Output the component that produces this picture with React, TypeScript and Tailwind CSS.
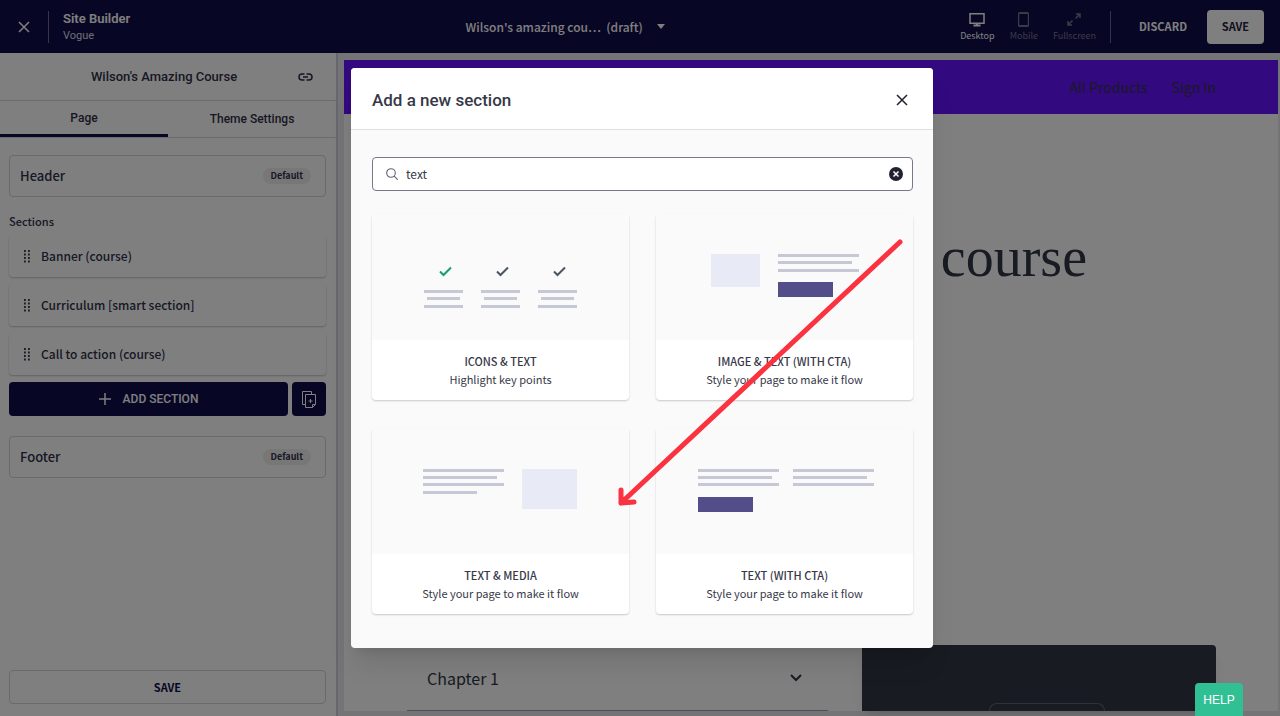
import { useState } from "react";
import type { ReactNode } from "react";

const sans = "font-['Noto_Sans_CJK_SC','Noto_Sans',sans-serif]";
const display = "font-[Roboto,'Noto_Sans',sans-serif]";

const pageSections = ["Banner (course)", "Curriculum [smart section]", "Call to action (course)"];

interface LineProps {
  x: number;
  y: number;
  width: number;
}

function Line({ x, y, width }: LineProps) {
  return <rect x={x} y={y} width={width} height="3" fill="#c6c9d5" />;
}

function CtaBlock({ x, y }: { x: number; y: number }) {
  return <rect x={x} y={y} width="55" height="15" fill="#534e8a" />;
}

const templates: { title: string; description: string; art: ReactNode }[] = [
  {
    title: "ICONS & TEXT",
    description: "Highlight key points",
    art: (
      <>
        {[0, 57, 114].map((offset) => (
          <g key={offset} transform={`translate(${offset} 0)`}>
            <path
              d="M68 57.5l3.5 3.5 7.5-7.5"
              fill="none"
              stroke={offset === 0 ? "#12a06c" : "#4b5560"}
              strokeWidth="2"
            />
            <Line x={52} y={76} width={39} />
            <Line x={55} y={83} width={33} />
            <Line x={52} y={91} width={39} />
          </g>
        ))}
      </>
    ),
  },
  {
    title: "IMAGE & TEXT (WITH CTA)",
    description: "Style your page to make it flow",
    art: (
      <>
        <rect x="55" y="40" width="49" height="33" fill="#e8ebf5" />
        <Line x={122} y={40} width={81} />
        <Line x={122} y={47} width={74} />
        <Line x={122} y={55} width={81} />
        <CtaBlock x={122} y={68} />
      </>
    ),
  },
  {
    title: "TEXT & MEDIA",
    description: "Style your page to make it flow",
    art: (
      <>
        <Line x={51} y={41} width={81} />
        <Line x={51} y={48} width={74} />
        <Line x={51} y={55} width={81} />
        <Line x={51} y={63} width={54} />
        <rect x="150" y="41" width="55" height="40" fill="#e8ebf5" />
      </>
    ),
  },
  {
    title: "TEXT (WITH CTA)",
    description: "Style your page to make it flow",
    art: (
      <>
        {[42, 137].map((x) => (
          <g key={x}>
            <Line x={x} y={41} width={81} />
            <Line x={x} y={48} width={74} />
            <Line x={x} y={55} width={81} />
          </g>
        ))}
        <CtaBlock x={42} y={69} />
      </>
    ),
  },
];

function CloseIcon({ className }: { className?: string }) {
  return (
    <svg viewBox="0 0 12 12" className={className} fill="none" stroke="currentColor" strokeWidth="1.5">
      <path d="M1 1l10 10M11 1L1 11" />
    </svg>
  );
}

function DragHandle() {
  return (
    <svg viewBox="0 0 6 13" className="h-[13px] w-[6px]" fill="#3a3a52">
      {[0, 3.5, 7, 10.5].map((y) => (
        <g key={y}>
          <rect x="0" y={y} width="1.8" height="2" />
          <rect x="4" y={y} width="1.8" height="2" />
        </g>
      ))}
    </svg>
  );
}

function TopBar() {
  return (
    <header className="flex h-[53px] shrink-0 items-center bg-[#100c4a] pr-4 pl-[18px] text-white">
      <button aria-label="Close">
        <CloseIcon className="h-3 w-3" />
      </button>
      <div className="ml-[18px] h-8 w-px bg-[#6d6b8d]" />
      <div className={`ml-[14px] ${display}`}>
        <h1 className="text-[13px] leading-[18px] font-semibold">Site Builder</h1>
        <p className="text-[11px] leading-4 text-[#dddde6]">Vogue</p>
      </div>

      <div className="flex flex-1 justify-center pl-10">
        <button className="flex items-center gap-[14px] text-xs leading-5 font-medium">
          <span>Wilson's amazing cou…&nbsp; (draft)</span>
          <svg viewBox="0 0 8 5" className="h-[5px] w-2" fill="currentColor">
            <path d="M0 0h8L4 5z" />
          </svg>
        </button>
      </div>

      <div className="flex gap-[15px] text-[9px] leading-3">
        <button className="flex flex-col items-center gap-[3px]">
          <svg viewBox="0 0 16 15" className="h-[15px] w-4" fill="none" stroke="currentColor">
            <rect x="1" y="1.75" width="14" height="9.5" strokeWidth="1.5" />
            <path d="M4.5 13.5h7M8 11.500v2" strokeWidth="2" />
          </svg>
          Desktop
        </button>
        <button className="flex flex-col items-center gap-[3px] text-[#77768f]">
          <svg viewBox="0 0 11 15" className="h-[15px] w-[11px]" fill="none" stroke="currentColor" strokeWidth="1.2">
            <rect x=".6" y=".6" width="9.800" height="13.800" rx="1" />
            <path d="M1 1.500h9M1 13.500h9" />
          </svg>
          Mobile
        </button>
        <button className="flex flex-col items-center gap-[3px] text-[#77768f]">
          {/* Two arrows with a gap between them */}
          <svg viewBox="0 0 14 15" className="h-[15px] w-[14px]" fill="none" stroke="currentColor" strokeWidth="1.5">
            <path d="M9 2h4v4M13 2L8.500 6.500M5 13H1V9M1 13l4.500-4.500" />
          </svg>
          Fullscreen
        </button>
      </div>
      <div className="ml-[14px] h-8 w-px bg-[#6d6b8d]" />
      <button className="ml-7 text-[11px] font-bold">DISCARD</button>
      <button className="ml-5 h-[34px] w-[57px] rounded-sm bg-white text-[11px] font-bold text-[#232340]">SAVE</button>
    </header>
  );
}

function DefaultCard({ label }: { label: string }) {
  return (
    <div className="flex h-[42px] items-center justify-between rounded-sm border border-[#d4d4d8] pr-[14px] pl-[10px]">
      <span className="text-[13px] leading-5 font-medium">{label}</span>
      <span className="rounded-full bg-[#eeeef0] px-2 text-[9px] leading-4 font-bold">Default</span>
    </div>
  );
}

function Sidebar() {
  return (
    <aside className="flex w-[338px] shrink-0 flex-col border-r-2 border-[#cfcfda] text-[#30304a]">
      <div className={`flex h-12 items-center border-b border-[#d9d9dd] pr-[23px] pl-[30px] ${display}`}>
        <h2 className="flex-1 text-center text-[13px] font-medium">Wilson's Amazing Course</h2>
        <button aria-label="Copy link">
          <svg viewBox="0 0 15 8" className="h-2 w-[15px]" fill="none" stroke="currentColor" strokeWidth="1.5">
            <path d="M6.500 1H4a3 3 0 0 0 0 6h2.500M8.500 1H11a3 3 0 0 1 0 6H8.500M5 4h5" />
          </svg>
        </button>
      </div>
      <div role="tablist" className={`grid h-[37px] grid-cols-2 border-b border-[#d9d9dd] text-xs font-medium ${display}`}>
        <button role="tab" aria-selected="true" className="border-b-3 border-[#100c4a]">
          Page
        </button>
        <button role="tab" aria-selected="false">
          Theme Settings
        </button>
      </div>

      <div className="flex flex-1 flex-col pt-[17px] pr-[10px] pb-3 pl-[9px]">
        <DefaultCard label="Header" />
        <h3 className="mt-4 text-[11px] leading-4 font-medium">Sections</h3>
        <ul className="mt-[6px] flex flex-col gap-[7px]">
          {pageSections.map((name) => (
            <li
              key={name}
              className="flex h-[42px] items-center gap-[11px] rounded-sm pl-[15px] shadow-[0_1px_2px_rgba(0,0,0,0.24)]"
            >
              <DragHandle />
              <span className="text-xs leading-5 font-medium">{name}</span>
            </li>
          ))}
        </ul>
        <div className="mt-[7px] flex gap-1 text-white">
          <button
            className={`flex h-[34px] flex-1 items-center justify-center gap-3 rounded-sm bg-[#100c4a] text-xs font-medium ${display}`}
          >
            <svg viewBox="0 0 12 12" className="h-3 w-3" stroke="currentColor" strokeWidth="1.5">
              <path d="M6 0v12M0 6h12" />
            </svg>
            ADD SECTION
          </button>
          <button aria-label="Copy section" className="flex h-[34px] w-[34px] items-center justify-center rounded-sm bg-[#100c4a]">
            <svg viewBox="0 0 14 17" className="h-[17px] w-[14px]" fill="none" stroke="currentColor">
              <path d="M3 13.500H.5V.5h9v2.500M3.500 3.500h10v10l-3 3h-7zM13.500 13.500h-3v3" />
              <path d="M8.500 8v4M6.500 10h4" />
            </svg>
          </button>
        </div>
        <div className="mt-5">
          <DefaultCard label="Footer" />
        </div>
        <button className="mt-auto h-[34px] rounded-sm border border-[#d4d4d8] text-[11px] font-bold text-[#100c4a]">
          SAVE
        </button>
      </div>
    </aside>
  );
}

function Preview() {
  return (
    <main className="flex min-w-0 flex-1 bg-[#e9e9ec] pt-[7px] pr-[2px] pb-[5px] pl-[6px]">
      <div className="flex flex-1 flex-col bg-white text-[#303644]">
        <nav className="flex h-[54px] items-center justify-end gap-6 bg-[#6612fe] pr-[62px] text-sm">
          <a href="#products">All Products</a>
          <a href="#signin">Sign In</a>
        </nav>
        <h2 className="mt-[111px] pr-[191px] text-right font-['Liberation_Serif',serif] text-[56px] leading-[64px]">
          course
        </h2>
        <div className="mt-auto flex h-[66px] pr-[62px] pl-[63px]">
          <div className="mr-[34px] flex flex-1 items-center justify-between border-b border-[#9a9ab8] pr-[26px] pl-5">
            <span className="text-base">Chapter 1</span>
            <svg viewBox="0 0 12 8" className="h-2 w-3" fill="none" stroke="currentColor" strokeWidth="2">
              <path d="M1 1l5 5 5-5" />
            </svg>
          </div>
          <div className="flex w-[354px] items-end justify-center rounded-t-sm bg-[#303644] pl-4 shadow-lg">
            <div className="h-2 w-[116px] rounded-t-lg border border-b-0 border-[#62627c]" />
          </div>
        </div>
      </div>
    </main>
  );
}

function AddSectionDialog() {
  const [query, setQuery] = useState("text");

  return (
    <div
      role="dialog"
      aria-labelledby="dialog-title"
      className="w-[582px] overflow-hidden rounded-sm bg-[#fafafa] text-[#373848] shadow-xl"
    >
      <div className="flex h-[62px] items-center justify-between border-b border-[#dfdfe8] bg-white pt-[2px] pr-[25px] pl-[21px]">
        <h2 id="dialog-title" className={`text-[17px] leading-6 font-medium ${display}`}>
          Add a new section
        </h2>
        <button aria-label="Close dialog" className="text-[#20222f]">
          <CloseIcon className="h-3 w-3" />
        </button>
      </div>
      <div className="pt-[27px] pr-5 pb-[34px] pl-[21px]">
        <label className="flex h-[34px] items-center rounded-sm border border-[#77788a] bg-white pr-[9px] pl-[13px]">
          <svg viewBox="0 0 12 12" className="h-3 w-3" fill="none" stroke="#606174" strokeWidth="1.1">
            <circle cx="5" cy="5" r="4.300" />
            <path d="M8.200 8.200l3.500 3.500" />
          </svg>
          <input
            type="text"
            aria-label="Search sections"
            value={query}
            onChange={(event) => setQuery(event.target.value)}
            className="ml-2 min-w-0 flex-1 text-xs outline-none"
          />
          <button aria-label="Clear search" onClick={() => setQuery("")}>
            <svg viewBox="0 0 14 14" className="h-[14px] w-[14px]">
              <circle cx="7" cy="7" r="7" fill="#20222f" />
              <path d="M4.500 4.500l5 5M9.500 4.500l-5 5" stroke="#fff" strokeWidth="1.500" />
            </svg>
          </button>
        </label>
        <div className="mt-[23px] grid grid-cols-2 gap-x-[27px] gap-y-7">
          {templates.map(({ title, description, art }) => (
            <button key={title} className="rounded-sm bg-white text-center shadow-[0_1px_2px_rgba(0,0,0,0.2)]">
              <span className="flex h-[126px] justify-center bg-[#fafafa]">
                <svg viewBox="0 0 257 126" className="h-[126px] w-[257px]">
                  {art}
                </svg>
              </span>
              <span className="block py-3 text-[11px] leading-[18px]">
                <span className="block font-medium">{title}</span>
                <span className="block">{description}</span>
              </span>
            </button>
          ))}
        </div>
      </div>
    </div>
  );
}

export default function App() {
  return (
    <div className={`relative flex h-screen flex-col overflow-hidden bg-white ${sans}`}>
      <TopBar />
      <div className="flex min-h-0 flex-1">
        <Sidebar />
        <Preview />
      </div>

      <div className="absolute inset-0 flex items-center justify-center bg-black/50 pl-1">
        <AddSectionDialog />
      </div>

      {/* Pointer to the Text & Media card */}
      <svg
        viewBox="0 0 286 270"
        className="pointer-events-none absolute top-[238px] left-[618px] h-[270px] w-[286px]"
        fill="none"
        stroke="#fb323f"
        strokeWidth="5"
        strokeLinecap="round"
        strokeLinejoin="round"
      >
        <path d="M282 4L3 265M3 252v13l13-1" />
      </svg>

      <button className="absolute right-[37px] bottom-0 h-[33px] w-12 rounded-t-sm bg-[#31c094] font-['Liberation_Sans',sans-serif] text-xs text-white">
        HELP
      </button>
    </div>
  );
}
